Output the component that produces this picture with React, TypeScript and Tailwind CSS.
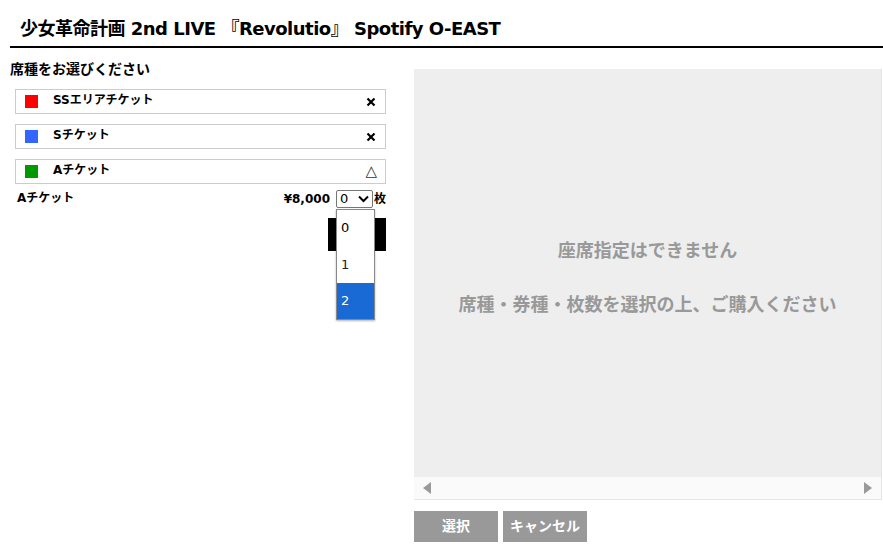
const seatTypes = [
  { name: 'SSエリアチケット', color: 'bg-[#ff0000]', soldOut: true },
  { name: 'Sチケット', color: 'bg-[#3366ff]', soldOut: true },
  { name: 'Aチケット', color: 'bg-[#009900]', soldOut: false },
];

export default function App() {
  return (
    <div className="w-[883px] h-[556px] bg-white text-black font-['DejaVu_Sans','Noto_Sans_CJK_JP',sans-serif] overflow-hidden">
      <div className="ml-[10px] border-b-2 border-black pt-[17px] pb-[6px] pl-[10px]">
        <h1 className="text-[18px] leading-[23px] font-bold tracking-[-0.5px]">少女革命計画 2nd LIVE 『Revolutio』 Spotify O-EAST</h1>
      </div>

      <div className="flex pl-[10px]">
        <div className="w-[380px] shrink-0">
          <h2 className="mt-[11px] text-[14px] leading-[20px] font-bold">席種をお選びください</h2>

          <div className="mt-[10px] flex flex-col gap-[10px] pl-[5px] pr-[4px]">
            {seatTypes.map(s => (
              <div key={s.name} className="flex h-[25px] items-center border border-[#cccccc] pl-[9px] pr-[8px]">
                <span className={`h-[13px] w-[13px] ${s.color}`} />
                <span className="ml-[15px] flex-1 text-[12px] font-bold leading-none -mt-[3px]">{s.name}</span>
                {s.soldOut ? (
                  <svg className="mr-[1px]" width="10" height="10" viewBox="0 0 10 10"><path d="M1.5 1.5 L8.5 8.5 M8.5 1.5 L1.5 8.5" stroke="#000" strokeWidth="2.2" /></svg>
                ) : (
                  <span className="text-[15px] leading-none text-[#333]">△</span>
                )}
              </div>
            ))}
          </div>

          <div className="mt-[6px] flex items-center pl-[7px] pr-[4px]">
            <span className="flex-1 text-[12px] font-bold -mt-[3px]">Aチケット</span>
            <span className="text-[12px] font-bold">¥8,000</span>
            <div className="relative ml-[6px]">
              <div className="flex h-[18px] w-[37px] items-center justify-between rounded-[2px] border border-[#767676] px-[3px] text-[13px]">
                <span>0</span>
                <svg width="11" height="8" viewBox="0 0 11 8"><path d="M1 1.5 L5.5 6 L10 1.5" fill="none" stroke="#000" strokeWidth="2" /></svg>
              </div>
              <div className="absolute left-0 top-[19px] z-10 w-[39px] border border-[#888] bg-white text-[13px] shadow-[0_1px_2px_rgba(0,0,0,0.3)]">
                <div className="h-[37px] pl-[4px] pt-[8px]">0</div>
                <div className="h-[36px] pl-[4px] pt-[8px] text-[#222]">1</div>
                <div className="h-[36px] bg-[#1a6ad6] pl-[4px] pt-[8px] text-white">2</div>
              </div>
            </div>
            <span className="ml-[1px] text-[12px] font-bold">枚</span>
          </div>

          <div className="mt-[10px] flex justify-end pr-[4px]">
            <div className="h-[33px] w-[58px] bg-black" />
          </div>
        </div>

        <div className="ml-[24px] mt-[21px] w-[468px]">
          <div className="flex h-[431px] flex-col border-r border-[#e5e5e5] bg-[#eeeeee]">
            <div className="flex flex-1 flex-col items-center pt-[170px] text-[18px] leading-[24px] font-bold text-[#999999]">
              <p>座席指定はできません</p>
              <p className="mt-[30px]">席種・券種・枚数を選択の上、ご購入ください</p>
            </div>
            <div className="flex h-[23px] items-center justify-between border-b border-[#e5e5e5] bg-[#fafafa] px-[8px]">
              <svg width="9" height="12" viewBox="0 0 9 12"><path d="M9 0 L1 6 L9 12 Z" fill="#999" /></svg>
              <svg width="9" height="12" viewBox="0 0 9 12"><path d="M0 0 L8 6 L0 12 Z" fill="#999" /></svg>
            </div>
          </div>
          <div className="mt-[11px] flex gap-[5px]">
            <button className="h-[31px] w-[84px] bg-[#999999] text-[14px] font-bold text-white">選択</button>
            <button className="h-[31px] w-[84px] bg-[#999999] text-[14px] font-bold text-white">キャンセル</button>
          </div>
        </div>
      </div>
    </div>
  );
}
